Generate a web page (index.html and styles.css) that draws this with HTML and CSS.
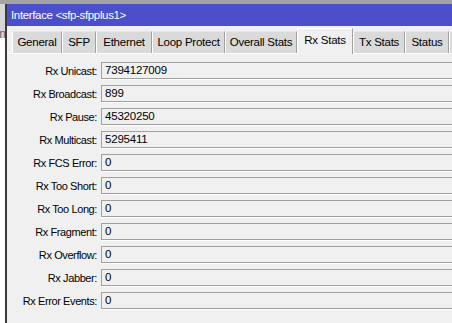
FILE: index.html
```html
<!DOCTYPE html>
<html>
<head>
<meta charset="utf-8">
<link rel="stylesheet" href="styles.css">
</head>
<body>
<div class="topband"></div>
<div class="main">
  <div class="side"><div class="side-top">ini</div></div>
  <div class="window">
    <div class="titlebar">Interface &lt;sfp-sfpplus1&gt;</div>
    <div class="tabs">
      <div class="tab w-general">General</div>
      <div class="tab w-sfp">SFP</div>
      <div class="tab w-eth">Ethernet</div>
      <div class="tab w-loop">Loop Protect</div>
      <div class="tab w-overall">Overall Stats</div>
      <div class="tab active w-rx">Rx Stats</div>
      <div class="tab w-tx">Tx Stats</div>
      <div class="tab w-status">Status</div>
      <div class="tab w-more"></div>
    </div>
    <div class="panel">
      <div class="row"><div class="label">Rx Unicast:</div><div class="field">7394127009</div></div>
      <div class="row"><div class="label">Rx Broadcast:</div><div class="field">899</div></div>
      <div class="row"><div class="label">Rx Pause:</div><div class="field">45320250</div></div>
      <div class="row"><div class="label">Rx Multicast:</div><div class="field">5295411</div></div>
      <div class="row"><div class="label">Rx FCS Error:</div><div class="field">0</div></div>
      <div class="row"><div class="label">Rx Too Short:</div><div class="field">0</div></div>
      <div class="row"><div class="label">Rx Too Long:</div><div class="field">0</div></div>
      <div class="row"><div class="label">Rx Fragment:</div><div class="field">0</div></div>
      <div class="row"><div class="label">Rx Overflow:</div><div class="field">0</div></div>
      <div class="row"><div class="label">Rx Jabber:</div><div class="field">0</div></div>
      <div class="row"><div class="label">Rx Error Events:</div><div class="field">0</div></div>
    </div>
  </div>
</div>
</body>
</html>
```
FILE: styles.css
```css
html, body {
  margin: 0;
  padding: 0;
  width: 452px;
  height: 323px;
  overflow: hidden;
  background: #ffffff;
  font-family: "Liberation Sans", Arial, sans-serif;
  font-size: 11px;
  letter-spacing: -0.4px;
  color: #000;
}
.topband {
  height: 4px;
  background: #a3a3a3;
}
.main {
  display: flex;
  height: 319px;
}
.side {
  width: 5px;
  flex: none;
  background: #ffffff;
  overflow: hidden;
}
.side-top {
  height: 34px;
  background: #d6d6d6;
  color: #6a6a6a;
  font-size: 12px;
  line-height: 12px;
  padding-top: 24px;
  box-sizing: border-box;
  margin-left: -3px;
  white-space: nowrap;
}
.window {
  flex: none;
  width: 600px;
  border-left: 2px solid #3a3a3a;
  background: #f0f0f0;
  display: flex;
  flex-direction: column;
}
.titlebar {
  height: 22px;
  background: #4b4fc9;
  color: #ffffff;
  font-size: 11.5px;
  line-height: 23px;
  padding-left: 4px;
  letter-spacing: -0.35px;
}
.tabs {
  display: flex;
  align-items: flex-end;
  height: 28px;
  padding-left: 5px;
  background: #f0f0f0;
  border-bottom: 1px solid #ffffff;
  box-sizing: border-box;
}
.tab {
  height: 22px;
  box-sizing: border-box;
  background: #dadada;
  border-left: 1px solid #ffffff;
  border-right: 1px solid #a0a0a0;
  border-top: 1px solid #e6e6e6;
  text-align: center;
  line-height: 21px;
  font-size: 11.5px;
  letter-spacing: -0.25px;
  flex: none;
}
.tab.active {
  height: 26px;
  background: #f0f0f0;
  border-top: 1px solid #ffffff;
  margin-bottom: -1px;
  line-height: 22px;
  position: relative;
}
.w-general { width: 50px; }
.w-sfp { width: 34px; }
.w-eth { width: 56px; }
.w-loop { width: 73px; }
.w-overall { width: 72px; }
.w-rx { width: 56px; }
.w-tx { width: 52px; }
.w-status { width: 44px; }
.w-more { width: 60px; }
.panel {
  padding-top: 8px;
  display: flex;
  flex-direction: column;
  gap: 6px;
}
.row {
  display: flex;
  align-items: center;
  height: 17px;
}
.label {
  width: 94px;
  flex: none;
  text-align: right;
  padding-right: 4px;
  box-sizing: border-box;
}
.field {
  flex: 1;
  height: 17px;
  box-sizing: border-box;
  border: 1px solid #a0a0a0;
  border-right: none;
  box-shadow: 0 1px 0 #ffffff;
  padding-left: 3px;
  line-height: 15px;
  font-size: 11.5px;
  letter-spacing: -0.2px;
}
```
